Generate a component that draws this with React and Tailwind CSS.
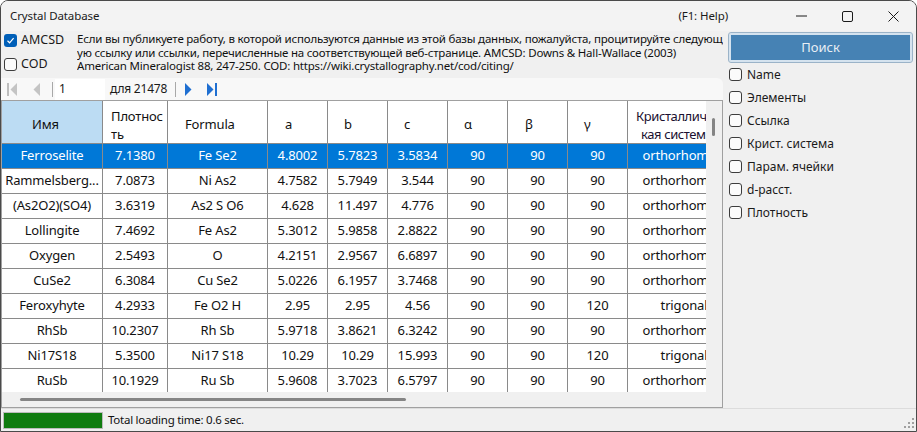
import React from "react";

const FONT = "font-['Noto_Sans','Liberation_Sans',sans-serif]";

const COLS = [
  { key: "name", w: "w-[101px]" },
  { key: "dens", w: "w-[65px]" },
  { key: "formula", w: "w-[100px]" },
  { key: "a", w: "w-[60px]" },
  { key: "b", w: "w-[60px]" },
  { key: "c", w: "w-[60px]" },
  { key: "al", w: "w-[60px]" },
  { key: "be", w: "w-[60px]" },
  { key: "ga", w: "w-[60px]" },
  { key: "sys", w: "w-[112px]" },
];

const ROWS = [
  ["Ferroselite", "7.1380", "Fe Se2", "4.8002", "5.7823", "3.5834", "90", "90", "90", "orthorhombic"],
  ["Rammelsbergite", "7.0873", "Ni As2", "4.7582", "5.7949", "3.544", "90", "90", "90", "orthorhombic"],
  ["(As2O2)(SO4)", "3.6319", "As2 S O6", "4.628", "11.497", "4.776", "90", "90", "90", "orthorhombic"],
  ["Lollingite", "7.4692", "Fe As2", "5.3012", "5.9858", "2.8822", "90", "90", "90", "orthorhombic"],
  ["Oxygen", "2.5493", "O", "4.2151", "2.9567", "6.6897", "90", "90", "90", "orthorhombic"],
  ["CuSe2", "6.3084", "Cu Se2", "5.0226", "6.1957", "3.7468", "90", "90", "90", "orthorhombic"],
  ["Feroxyhyte", "4.2933", "Fe O2 H", "2.95", "2.95", "4.56", "90", "90", "120", "trigonal"],
  ["RhSb", "10.2307", "Rh Sb", "5.9718", "3.8621", "6.3242", "90", "90", "90", "orthorhombic"],
  ["Ni17S18", "5.3500", "Ni17 S18", "10.29", "10.29", "15.993", "90", "90", "120", "trigonal"],
  ["RuSb", "10.1929", "Ru Sb", "5.9608", "3.7023", "6.5797", "90", "90", "90", "orthorhombic"],
];

const SEARCH_FIELDS = ["Name", "Элементы", "Ссылка", "Крист. система", "Парам. ячейки", "d-расст.", "Плотность"];

function CheckBox({ checked }) {
  if (checked) {
    return (
      <span className="flex h-[13px] w-[13px] shrink-0 items-center justify-center rounded-[3px] bg-[#005fb8]">
        <svg width="9" height="9" viewBox="0 0 9 9">
          <path d="M1.5 4.8 L3.6 6.8 L7.6 2.2" fill="none" stroke="#fff" strokeWidth="1.2" />
        </svg>
      </span>
    );
  }
  return <span className="h-[13px] w-[13px] shrink-0 rounded-[3px] border border-[#3c3c3c] bg-[#fbfbfb]" />;
}

function TitleBar() {
  return (
    <div className="flex h-[30px] shrink-0 items-center bg-[#f3f3f3] text-[11.5px] tracking-[-0.1px] text-[#1a1a1a]">
      <span className="ml-[9px]">Crystal Database</span>
      <span className="ml-auto mr-[50px]">(F1: Help)</span>
      <div className="flex h-full items-center">
        <div className="flex h-full w-[46px] items-center justify-center">
          <svg width="11" height="2" viewBox="0 0 11 2">
            <path d="M0 1 H11" stroke="#1a1a1a" strokeWidth="1" />
          </svg>
        </div>
        <div className="flex h-full w-[46px] items-center justify-center">
          <svg width="11" height="11" viewBox="0 0 11 11">
            <rect x="0.5" y="0.5" width="10" height="10" rx="1.5" fill="none" stroke="#1a1a1a" strokeWidth="1" />
          </svg>
        </div>
        <div className="flex h-full w-[46px] items-center justify-center">
          <svg width="11" height="11" viewBox="0 0 11 11">
            <path d="M0.5 0.5 L10.5 10.5 M10.5 0.5 L0.5 10.5" stroke="#1a1a1a" strokeWidth="1" />
          </svg>
        </div>
      </div>
    </div>
  );
}

function NavBar() {
  return (
    <div className="flex h-[22px] shrink-0 items-center rounded-tr-[6px] bg-[#f8f8f8] text-[12px] tracking-[-0.2px] text-[#1a1a1a]">
      <svg className="ml-[6px]" width="11" height="13" viewBox="0 0 11 13">
        <rect x="0" y="0" width="2" height="13" fill="#bdbdbd" />
        <path d="M10 0 L3.5 6.5 L10 13 Z" fill="#c4c4c4" />
      </svg>
      <svg className="ml-[15px]" width="7" height="13" viewBox="0 0 7 13">
        <path d="M7 0 L0.5 6.5 L7 13 Z" fill="#c4c4c4" />
      </svg>
      <span className="ml-[12px] h-[15px] w-px bg-[#a8a8a8]" />
      <div className="ml-[2px] flex h-[21px] w-[50px] items-center bg-white pl-[4px]">1</div>
      <span className="ml-[5px]">для 21478</span>
      <span className="ml-[8px] h-[15px] w-px bg-[#a8a8a8]" />
      <svg className="ml-[9px]" width="7" height="13" viewBox="0 0 7 13">
        <path d="M0 0 L6.5 6.5 L0 13 Z" fill="#1f6fd1" />
      </svg>
      <svg className="ml-[15px]" width="11" height="13" viewBox="0 0 11 13">
        <path d="M0 0 L6.5 6.5 L0 13 Z" fill="#1f6fd1" />
        <rect x="8" y="0" width="2" height="13" fill="#1f6fd1" />
      </svg>
    </div>
  );
}

function Table() {
  const head = "flex shrink-0 items-center border-r border-b border-[#8a8a8a] pt-[5px]";
  return (
    <div className="flex min-h-0 flex-1 flex-col border border-[#a0a0a0] bg-[#f0f0f0]">
      <div className="flex min-h-0 flex-1">
        <div className="min-w-0 flex-1 overflow-hidden text-[13px] tracking-[-0.15px] text-[#111]">
          <div className="flex h-[43px] w-max bg-white">
            <div className={`${COLS[0].w} ${head} bg-[#bcdcf3] pl-[30px]`}>Имя</div>
            <div className={`${COLS[1].w} ${head} pl-[8px] leading-[18px]`}>
              Плотнос<br />ть
            </div>
            <div className={`${COLS[2].w} ${head} pl-[17px]`}>Formula</div>
            <div className={`${COLS[3].w} ${head} pl-[17px]`}>a</div>
            <div className={`${COLS[4].w} ${head} pl-[16px]`}>b</div>
            <div className={`${COLS[5].w} ${head} pl-[16px]`}>c</div>
            <div className={`${COLS[6].w} ${head} pl-[16px]`}>α</div>
            <div className={`${COLS[7].w} ${head} pl-[17px]`}>β</div>
            <div className={`${COLS[8].w} ${head} pl-[16px]`}>γ</div>
            <div className={`${COLS[9].w} flex shrink-0 flex-col justify-center whitespace-nowrap border-b border-[#8a8a8a] pt-[5px] leading-[18px] tracking-[-0.4px] text-[#1a1030]`}>
              <span className="pl-[8px]">Кристаллич</span>
              <span className="pl-[13px]">кая систем</span>
            </div>
          </div>
          {ROWS.map((row, i) => (
            <div
              key={row[0]}
              className={`flex h-[25px] w-max ${i === 0 ? "bg-[#0078d7] text-white" : "bg-white"}`}
            >
              {row.map((cell, j) => (
                <div
                  key={j}
                  className={`${COLS[j].w} flex shrink-0 items-center justify-center overflow-hidden whitespace-nowrap border-b border-[#8a8a8a] ${j < 9 ? "border-r" : ""}`}
                >
                  {j === 0 && cell.length > 13 ? "Rammelsberg..." : cell}
                </div>
              ))}
            </div>
          ))}
        </div>
        <div className="relative w-[16px] shrink-0 bg-[#f0f0f0]">
          <span className="absolute left-[6px] top-[17px] h-[18px] w-[3px] rounded-full bg-[#858585]" />
        </div>
      </div>
      <div className="flex h-[15px] shrink-0 items-center bg-[#f0f0f0] pl-[18px]">
        <span className="h-[3px] w-[386px] rounded-full bg-[#858585]" />
      </div>
    </div>
  );
}

export default function App() {
  return (
    <div className={`${FONT} flex h-[432px] w-[917px] flex-col overflow-hidden rounded-t-[8px] border border-[#4a4a4a] bg-[#f0f0f0]`}>
      <TitleBar />
      <div className="flex min-h-0 flex-1">
        <div className="flex w-[722px] shrink-0 flex-col">
          <div className="flex h-[47px] shrink-0">
            <div className="flex w-[76px] shrink-0 flex-col gap-[10px] pl-[3px] pt-[2px] text-[12.5px] leading-[14px] text-[#1a1a1a]">
              <label className="flex h-[14px] items-center gap-[4px]">
                <CheckBox checked />
                <span>AMCSD</span>
              </label>
              <label className="flex h-[14px] items-center gap-[4px]">
                <CheckBox />
                <span>COD</span>
              </label>
            </div>
            <div className="min-w-0 flex-1 overflow-hidden pt-[1px] text-[11.5px] leading-[13.5px] tracking-[-0.2px] text-[#111]">
              <div className="whitespace-nowrap">Если вы публикуете работу, в которой используются данные из этой базы данных, пожалуйста, процитируйте следующ</div>
              <div className="whitespace-nowrap">ую ссылку или ссылки, перечисленные на соответствующей веб-странице. AMCSD: Downs &amp; Hall-Wallace (2003)</div>
              <div className="whitespace-nowrap">American Mineralogist 88, 247-250. COD: https://wiki.crystallography.net/cod/citing/</div>
            </div>
          </div>
          <NavBar />
          <Table />
        </div>
        <div className="flex min-w-0 flex-1 flex-col pl-[6px] pr-[3px] pt-[2px]">
          <button className="flex h-[29px] w-[183px] shrink-0 items-center justify-center rounded-[2px] border-2 border-[#d5e3ef] bg-[#4682b4] text-[13px] text-[#e9eff5] outline outline-1 outline-[#9bb3c8]">
            Поиск
          </button>
          <div className="flex flex-col pt-[1px]">
            {SEARCH_FIELDS.map((f) => (
              <label key={f} className="flex h-[23px] items-center gap-[5px] text-[12px] text-[#1a1a1a]">
                <CheckBox />
                <span>{f}</span>
              </label>
            ))}
          </div>
        </div>
      </div>
      <div className="flex h-[23px] shrink-0 items-center border-t border-[#dcdcdc] bg-[#f0f0f0] text-[11.5px] tracking-[-0.25px] text-[#111]">
        <div className="ml-[2px] h-[17px] w-[100px] border border-[#bcbcbc] bg-[#107c10]" />
        <span className="ml-[5px]">Total loading time: 0.6 sec.</span>
        <svg className="ml-auto mr-[2px] mt-[6px]" width="14" height="14" viewBox="0 0 14 14">
          {[[12, 2], [12, 6], [8, 6], [12, 10], [8, 10], [4, 10]].map(([x, y]) => (
            <rect key={`${x}-${y}`} x={x} y={y} width="2" height="2" fill="#a0a0a0" />
          ))}
        </svg>
      </div>
    </div>
  );
}
